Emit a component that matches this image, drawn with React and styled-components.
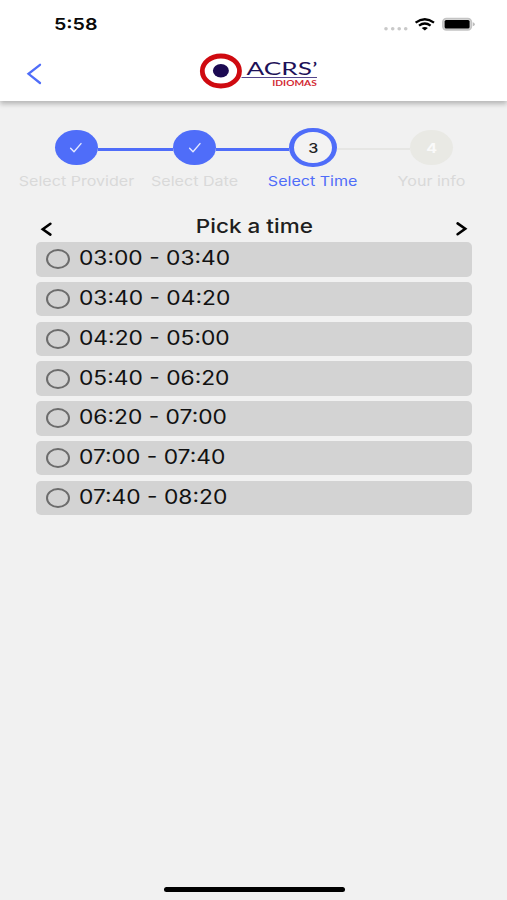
import { useState } from 'react';
import styled, { createGlobalStyle } from 'styled-components';

const GlobalStyle = createGlobalStyle`
	* {
		box-sizing: border-box;
	}
	body {
		margin: 0;
		background-color: #f1f1f1;
		font-family: Inter, 'Liberation Sans', sans-serif;
	}
	button {
		padding: 0;
		border: none;
		background: none;
		font: inherit;
		cursor: pointer;
	}
	svg {
		display: block;
	}
`;

const BLUE = '#4f6df9';

const STEPS = [
	{ label: 'Select Provider', status: 'done' },
	{ label: 'Select Date', status: 'done' },
	{ label: 'Select Time', status: 'current' },
	{ label: 'Your info', status: 'next' },
];

const SLOTS = [
	'03:00 - 03:40',
	'03:40 - 04:20',
	'04:20 - 05:00',
	'05:40 - 06:20',
	'06:20 - 07:00',
	'07:00 - 07:40',
	'07:40 - 08:20',
];

const Wide = styled.span`
	display: inline-block;
	white-space: nowrap;
	transform: scaleX(${({ $by = 1.19 }) => $by});
	transform-origin: ${({ $from = 'center' }) => $from};
`;

const Screen = styled.div`
	display: flex;
	flex-direction: column;
	width: 507px;
	height: 900px;
	overflow: hidden;
	background-color: #f1f1f1;
`;

const Header = styled.header`
	flex: none;
	height: 101px;
	background-color: #fff;
	box-shadow: 0 3px 5px rgba(0, 0, 0, 0.25);
`;

const StatusBar = styled.div`
	display: flex;
	justify-content: space-between;
	height: 48px;
	padding: 14.4px 32px 0 53.6px;
	font-size: 16.5px;
	font-weight: 600;
	line-height: 21px;
	color: #0a0a0a;
`;

const NavBar = styled.div`
	display: grid;
	grid-template-columns: 173px 120px 1fr;
	padding: 5px 0 0 26px;
`;

const BackButton = styled.button`
	width: 16px;
	height: 22px;
	margin-top: 10px;
	color: ${BLUE};
`;

const Stepper = styled.div`
	display: grid;
	grid-template-columns: repeat(4, 118.3px);
	flex: none;
	justify-content: center;
	height: 113px;
	padding: 26.5px 0 0 0.6px;
`;

const Step = styled.div`
	display: flex;
	flex-direction: column;
	align-items: center;
	font-size: 13.5px;
	line-height: 18px;
	color: ${({ $status }) => ($status === 'current' ? BLUE : '#d9d9d9')};
`;

const Track = styled.div`
	display: flex;
	align-items: center;
	width: 100%;
	height: 40px;
	margin-bottom: 4px;
`;

const Connector = styled.div`
	flex: 1;
	height: ${({ $state }) => ($state === 'blue' ? 3 : 2)}px;
	margin-top: 3px;
	background-color: ${({ $state }) =>
		({ blue: BLUE, grey: '#e6e6e4', none: 'transparent' })[$state]};
`;

const Circle = styled.div`
	display: flex;
	align-items: center;
	justify-content: center;
	flex: none;
	width: ${({ $status }) => ($status === 'current' ? 47.5 : 43)}px;
	height: ${({ $status }) => ($status === 'current' ? 39.5 : 35.5)}px;
	border-style: solid;
	border-color: ${BLUE};
	border-width: ${({ $status }) => ($status === 'current' ? '4.5px 5.5px' : 0)};
	border-radius: 50%;
	background-color: ${({ $status }) =>
		({ done: BLUE, current: '#f3f3f3', next: '#e9e9e4' })[$status]};
	color: ${({ $status }) => ($status === 'current' ? '#222' : '#fafafa')};
	font-size: 13.5px;
	font-weight: ${({ $status }) => ($status === 'current' ? 500 : 700)};
`;

const Picker = styled.main`
	flex: 1;
	padding: 0 35.5px 0 36.4px;
`;

const PickerHead = styled.div`
	display: flex;
	justify-content: space-between;
	height: 28px;
	padding: 0 3px 0 4px;
`;

const Arrow = styled.button`
	width: 13px;
	height: 16px;
	margin-top: 7px;
	color: #000;
	transform: ${({ $flipped }) => ($flipped ? 'rotate(180deg)' : 'none')};
`;

const Title = styled.h1`
	margin: 0 1px 0 0;
	font-size: 19px;
	font-weight: 500;
	line-height: 26px;
	color: #1e1e20;
`;

const SlotList = styled.div`
	display: flex;
	flex-direction: column;
	gap: 5.3px;
`;

const Slot = styled.button`
	display: flex;
	align-items: center;
	height: 34.5px;
	padding-left: 9.6px;
	border-radius: 5px;
	background-color: #d3d3d3;
	color: #111;
	font-size: 19.5px;
	line-height: 24px;

	& ${Wide} {
		margin: 0 0 2px 9px;
	}
`;

const Radio = styled.span`
	flex: none;
	width: 24px;
	height: 20px;
	border: 2px solid #6c6c6c;
	border-radius: 50%;
	background: ${({ $checked }) => ($checked ? BLUE : 'transparent')};
`;

const HomeBar = styled.div`
	flex: none;
	align-self: center;
	width: 181px;
	height: 5px;
	margin: 0 0 8px 1px;
	border-radius: 3px;
	background-color: #000;
`;

const StatusIcons = () => (
	<svg width="92" height="20" viewBox="383 14 92 20">
		<g fill="#c9c9c9">
			<circle cx="386" cy="28.8" r="1.8" />
			<circle cx="392.7" cy="28.8" r="1.8" />
			<circle cx="399.2" cy="28.8" r="1.8" />
			<circle cx="405.7" cy="28.8" r="1.8" />
		</g>
		<g fill="none" stroke="#000" strokeWidth="2.3">
			<path d="M415.6 22.6Q424.8 15.8 434 22.6" />
			<path d="M419 25.6Q424.8 21.4 430.6 25.6" />
		</g>
		<path d="M421.7 27.9Q424.8 25.9 427.9 27.9L424.8 30.6Z" />
		<rect x="442.8" y="18.5" width="28.6" height="11.4" rx="3.6" fill="#d8d8d8" stroke="#c4c4c4" strokeWidth="1.6" />
		<rect x="444.6" y="20" width="25" height="8.6" rx="1.6" />
		<path d="M472.8 22.2Q474.8 22.7 474.8 24.2T472.8 26.2Z" fill="#bbb" />
	</svg>
);

const Logo = () => (
	<svg width="120" height="36" viewBox="199 53 120 36">
		<ellipse cx="220.9" cy="71" rx="18.6" ry="15" fill="#fff" stroke="#cf0a10" strokeWidth="4.8" />
		<ellipse cx="220.9" cy="70.8" rx="8" ry="6.7" fill="#1c0a52" />
		<path d="M241.5 77.5H317" stroke="#54468c" strokeWidth="1" />
		<text
			x="246.6"
			y="74.6"
			fontFamily="Lato, sans-serif"
			fontSize="18"
			fill="#1d1158"
			textLength="71"
			lengthAdjust="spacingAndGlyphs"
		>
			ACRS’
		</text>
		<text
			x="272.3"
			y="86"
			fontFamily="Lato, sans-serif"
			fontSize="7.4"
			fontWeight="700"
			fill="#d32a35"
			textLength="44.5"
			lengthAdjust="spacingAndGlyphs"
		>
			IDIOMAS
		</text>
	</svg>
);

const Check = () => (
	<svg width="14" height="12" viewBox="0 0 14 12">
		<path
			d="M1.6 6.2L5 9.8L12 1.6"
			fill="none"
			stroke="#e4e9ff"
			strokeWidth="1.4"
			strokeLinecap="round"
			strokeLinejoin="round"
		/>
	</svg>
);

const ArrowIcon = () => (
	<svg width="13" height="16" viewBox="0 0 13 16">
		<path d="M10.4 2.8L2.8 8.2L10.4 13.6" fill="none" stroke="currentColor" strokeWidth="2.6" strokeLinecap="round" />
	</svg>
);

const connectorState = (index) => {
	if (index < 0 || index >= STEPS.length - 1) return 'none';
	return STEPS[index].status === 'done' ? 'blue' : 'grey';
};

const ProgressSteps = () => (
	<Stepper>
		{STEPS.map(({ label, status }, index) => (
			<Step key={label} $status={status}>
				<Track>
					<Connector $state={connectorState(index - 1)} />
					<Circle $status={status}>
						{status === 'done' ? <Check /> : <Wide>{index + 1}</Wide>}
					</Circle>
					<Connector $state={connectorState(index)} />
				</Track>
				<Wide>{label}</Wide>
			</Step>
		))}
	</Stepper>
);

export default function App() {
	const [selected, setSelected] = useState(null);

	return (
		<>
			<GlobalStyle />
			<Screen>
				<Header>
					<StatusBar>
						<Wide $from="left">5:58</Wide>
						<StatusIcons />
					</StatusBar>
					<NavBar>
						<BackButton title="Back">
							<svg width="16" height="22" viewBox="0 0 16 22">
								<path
									d="M14 1.8L2.5 10.8L14 20"
									fill="none"
									stroke="currentColor"
									strokeWidth="2.3"
									strokeLinecap="round"
								/>
							</svg>
						</BackButton>
						<Logo />
					</NavBar>
				</Header>
				<ProgressSteps />
				<Picker>
					<PickerHead>
						<Arrow title="Previous day">
							<ArrowIcon />
						</Arrow>
						<Title>
							<Wide $by={1.185}>Pick a time</Wide>
						</Title>
						<Arrow title="Next day" $flipped>
							<ArrowIcon />
						</Arrow>
					</PickerHead>
					<SlotList>
						{SLOTS.map((slot) => (
							<Slot key={slot} onClick={() => setSelected(slot)}>
								<Radio $checked={selected === slot} />
								<Wide $by={1.168} $from="left">
									{slot}
								</Wide>
							</Slot>
						))}
					</SlotList>
				</Picker>
				<HomeBar />
			</Screen>
		</>
	);
}
